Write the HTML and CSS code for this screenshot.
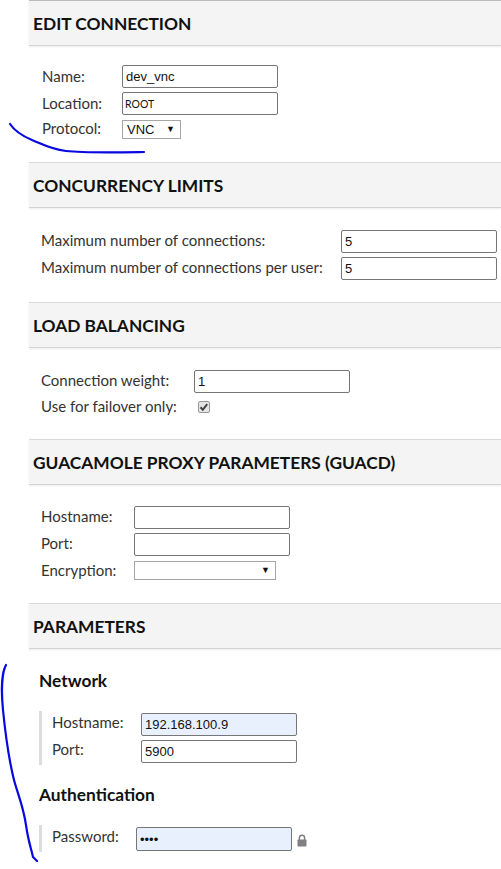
FILE: index.html
```html
<!DOCTYPE html>
<html lang="en">
<head>
    <meta charset="UTF-8">
    <title>Edit Connection</title>
    <link rel="stylesheet" href="styles.css">
</head>
<body>
    <div class="page">
        <section class="section section-edit">
            <h2 class="section-header">EDIT CONNECTION</h2>
            <div class="fields fields-edit">
                <div class="field">
                    <label class="field-label">Name:</label>
                    <input class="text-input" type="text" value="dev_vnc">
                </div>
                <div class="field">
                    <label class="field-label">Location:</label>
                    <div class="text-input location">ROOT</div>
                </div>
                <div class="field">
                    <label class="field-label label-raised">Protocol:</label>
                    <div class="select select-protocol">VNC<span class="arrow">▼</span></div>
                </div>
            </div>
        </section>

        <section class="section section-limits">
            <h2 class="section-header">CONCURRENCY LIMITS</h2>
            <div class="fields fields-limits">
                <div class="field">
                    <label class="field-label">Maximum number of connections:</label>
                    <input class="text-input" type="text" value="5">
                </div>
                <div class="field">
                    <label class="field-label">Maximum number of connections per user:</label>
                    <input class="text-input" type="text" value="5">
                </div>
            </div>
        </section>

        <section class="section section-balancing">
            <h2 class="section-header">LOAD BALANCING</h2>
            <div class="fields fields-balancing">
                <div class="field">
                    <label class="field-label">Connection weight:</label>
                    <input class="text-input" type="text" value="1">
                </div>
                <div class="field">
                    <label class="field-label label-raised">Use for failover only:</label>
                    <div class="checkbox">
                        <svg width="12" height="12" viewBox="0 0 12 12"><path d="M2.500 6.300 L4.800 8.800 L9.200 3.200" fill="none" stroke="#444" stroke-width="2"/></svg>
                    </div>
                </div>
            </div>
        </section>

        <section class="section section-proxy">
            <h2 class="section-header">GUACAMOLE PROXY PARAMETERS (GUACD)</h2>
            <div class="fields fields-proxy">
                <div class="field">
                    <label class="field-label">Hostname:</label>
                    <input class="text-input" type="text">
                </div>
                <div class="field">
                    <label class="field-label">Port:</label>
                    <input class="text-input" type="text">
                </div>
                <div class="field">
                    <label class="field-label">Encryption:</label>
                    <div class="select select-encryption"><span class="arrow">▼</span></div>
                </div>
            </div>
        </section>

        <section class="section section-params">
            <h2 class="section-header">PARAMETERS</h2>
            <h3 class="group-title group-network">Network</h3>
            <div class="group-fields group-fields-network">
                <div class="field">
                    <label class="field-label">Hostname:</label>
                    <input class="text-input autofilled" type="text" value="192.168.100.9">
                </div>
                <div class="field">
                    <label class="field-label">Port:</label>
                    <input class="text-input" type="text" value="5900">
                </div>
            </div>
            <h3 class="group-title group-auth">Authentication</h3>
            <div class="group-fields group-fields-auth">
                <div class="field">
                    <label class="field-label">Password:</label>
                    <input class="text-input autofilled password" type="password" value="abcd">
                    <svg class="lock" width="10" height="13" viewBox="0 0 10 13"><path d="M2.400 6 V3.800 A2.600 2.600 0 0 1 7.600 3.800 V6" fill="none" stroke="#808080" stroke-width="1.5"/><rect x="0.5" y="5.500" width="9" height="7" rx="0.8" fill="#808080"/></svg>
                </div>
            </div>
        </section>

        <!-- pen marks drawn over the screenshot -->
        <svg class="ink" width="501" height="869" viewBox="0 0 501 869">
            <path d="M10 124 C14 130 20 135 32 140 C42 144 50 149 66 151 C84 153 110 152.500 144 152"/>
            <path d="M6 665 C2 672 1 690 3 710 C5 730 9 760 14 780 C18 795 23 805 26 825 C28 840 31 848 33 857 L37 861"/>
        </svg>
    </div>
</body>
</html>
```

FILE: styles.css
```css
* {
    margin: 0;
    padding: 0;
    box-sizing: border-box;
}

body {
    font-family: "Lato", sans-serif;
    background-color: #fff;
    color: #333;
    font-size: 15px;
}

.page {
    position: relative;
    height: 869px;
    padding-left: 29px;
    overflow: hidden;
}

.ink {
    position: absolute;
    top: 0;
    left: 0;
    pointer-events: none;
}

.ink path {
    fill: none;
    stroke: #0808e0;
    stroke-width: 2.2;
    stroke-linecap: round;
}

.section-edit { height: 162px; }
.section-limits { height: 140px; }
.section-balancing { height: 137px; }
.section-proxy { height: 164px; }

.section-header {
    height: 46px;
    padding-left: 4px;
    background-color: #f4f4f4;
    border-top: 1px solid #d8d8d8;
    border-bottom: 1px solid #d4d4d4;
    box-shadow: 0 1px 2px rgba(0, 0, 0, 0.08);
    color: #111;
    font-size: 17.33px;
    font-weight: 700;
    line-height: 45px;
}

.section-edit .section-header {
    border-top-color: #bbb;
}

.fields {
    display: flex;
    flex-direction: column;
    gap: 4px;
    padding-top: 19px;
}

.fields-edit { padding-left: 13px; }
.fields-limits { padding-left: 12px; padding-top: 22px; }
.fields-balancing { padding-left: 12px; padding-top: 22px; }
.fields-proxy { padding-left: 12px; padding-top: 21px; }

.field {
    display: flex;
    align-items: flex-start;
}

.field-label {
    line-height: 22px;
    color: #333;
}

.fields-limits .field-label,
.fields-balancing .field-label,
.fields-proxy .field-label {
    margin-top: -1px;
}

.fields .label-raised { margin-top: -2px; }

.fields-edit .field-label { width: 80px; }
.fields-limits .field-label { width: 300px; }
.fields-balancing .field-label { width: 153px; }
.fields-proxy .field-label { width: 93px; }

.group-fields .field-label { margin-top: -2px; }
.group-fields-network .field-label { width: 89px; }
.group-fields-auth .field-label { width: 84px; }

.text-input {
    display: block;
    width: 156px;
    height: 23px;
    border: 1px solid #767676;
    border-radius: 2px;
    background-color: #fff;
    padding: 0 3px;
    font-family: "Liberation Sans", sans-serif;
    font-size: 13px;
    color: #111;
    outline: none;
}

.location {
    padding: 0 2px;
    font-family: "Lato", sans-serif;
    font-size: 10.5px;
    line-height: 22px;
}

.autofilled {
    background-color: #e8f0fe;
}

.password {
    height: 24px;
}

.select {
    position: relative;
    height: 19px;
    margin-top: 1px;
    border: 1px solid #a6a6a6;
    background-color: #fff;
    padding-left: 4px;
    font-family: "Liberation Sans", sans-serif;
    font-size: 13px;
    line-height: 17px;
    color: #111;
}

.select-protocol { width: 59px; }
.select-encryption { width: 142px; }

.arrow {
    position: absolute;
    right: 5px;
    top: 0;
    font-size: 9px;
}

.checkbox {
    width: 12px;
    height: 12px;
    margin: 4px 0 0 4px;
    border: 1px solid #999;
    border-radius: 2px;
    background-color: #e4e4e4;
}

.checkbox svg {
    display: block;
    margin: -1px;
}

.group-title {
    padding-left: 10px;
    color: #111;
    font-size: 17.33px;
    font-weight: 700;
    line-height: 20px;
}

.group-network { padding-top: 22px; }
.group-auth { padding-top: 20px; }

.group-fields {
    display: flex;
    flex-direction: column;
    gap: 4px;
    margin-left: 10px;
    padding: 2px 0 2px 10px;
    border-left: 3px solid #ddd;
}

.group-fields-network { margin-top: 20px; }
.group-fields-auth { margin-top: 20px; padding-bottom: 1px; }

.lock {
    margin: 7px 0 0 5px;
}
```
